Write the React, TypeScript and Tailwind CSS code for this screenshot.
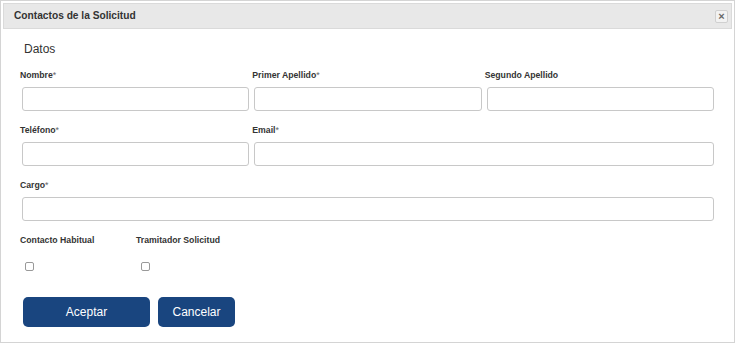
import React from "react";

const font = { fontFamily: '"Liberation Sans", Arial, sans-serif' };

export default function App() {
  return (
    <div className="w-[735px] h-[343px] bg-white border border-[#d4d4d4] p-[2px]" style={font}>
      {/* Header */}
      <div className="h-[26px] bg-[#e8e8e8] border border-[#dadada] flex items-center justify-between pl-[10px] pr-[3px]">
        <span className="text-[10.2px] font-bold text-[#333]">Contactos de la Solicitud</span>
        <button className="w-[13px] h-[13px] border border-[#d0d0d0] bg-[#f2f2f2] rounded-[2px] flex items-center justify-center text-[11px] leading-none font-bold text-[#666]">
          ×
        </button>
      </div>

      {/* Body */}
      <div className="pl-[19px] pr-[18px]">
        <div className="pl-[2px] pt-[13px] h-[40px] text-[12px] leading-[14px] text-[#333]">Datos</div>

        <div className="grid grid-cols-3 gap-x-[5px]">
          <Field label="Nombre" required />
          <Field label="Primer Apellido" required />
          <Field label="Segundo Apellido" />
          <Field label="Teléfono" required />
          <Field label="Email" required span />
          <Field label="Cargo" required full />
        </div>

        <div className="flex">
          <div className="w-[116px] -ml-[2px]">
            <Label text="Contacto Habitual" />
            <input type="checkbox" className="mt-[16px] ml-[5px] w-[9px] h-[9px] block appearance-none border border-[#999] rounded-[2px] bg-white" />
          </div>
          <div>
            <Label text="Tramitador Solicitud" />
            <input type="checkbox" className="mt-[16px] ml-[5px] w-[9px] h-[9px] block appearance-none border border-[#999] rounded-[2px] bg-white" />
          </div>
        </div>

        <div className="flex gap-[8px] mt-[26px] ml-[1px]">
          <button className="w-[127px] h-[30px] rounded-[5px] bg-[#19457f] text-white text-[12px]">Aceptar</button>
          <button className="w-[77px] h-[30px] rounded-[5px] bg-[#19457f] text-white text-[12px]">Cancelar</button>
        </div>
      </div>
    </div>
  );
}

function Label({ text, required }: { text: string; required?: boolean }) {
  return (
    <div className="h-[12px] leading-[12px] text-[8.7px] font-bold text-[#333] whitespace-nowrap">
      {text}
      {required && <span className="text-[#666] font-normal">*</span>}
    </div>
  );
}

function Field({
  label,
  required,
  span,
  full,
}: {
  label: string;
  required?: boolean;
  span?: boolean;
  full?: boolean;
}) {
  return (
    <div className={full ? "col-span-3 mb-[13px]" : span ? "col-span-2 mb-[13px]" : "mb-[13px]"}>
      <div className="-ml-[2px]">
        <Label text={label} required={required} />
      </div>
      <input className="mt-[6px] w-full h-[24px] border border-[#c8c8c8] rounded-[3px] bg-white block" />
    </div>
  );
}
